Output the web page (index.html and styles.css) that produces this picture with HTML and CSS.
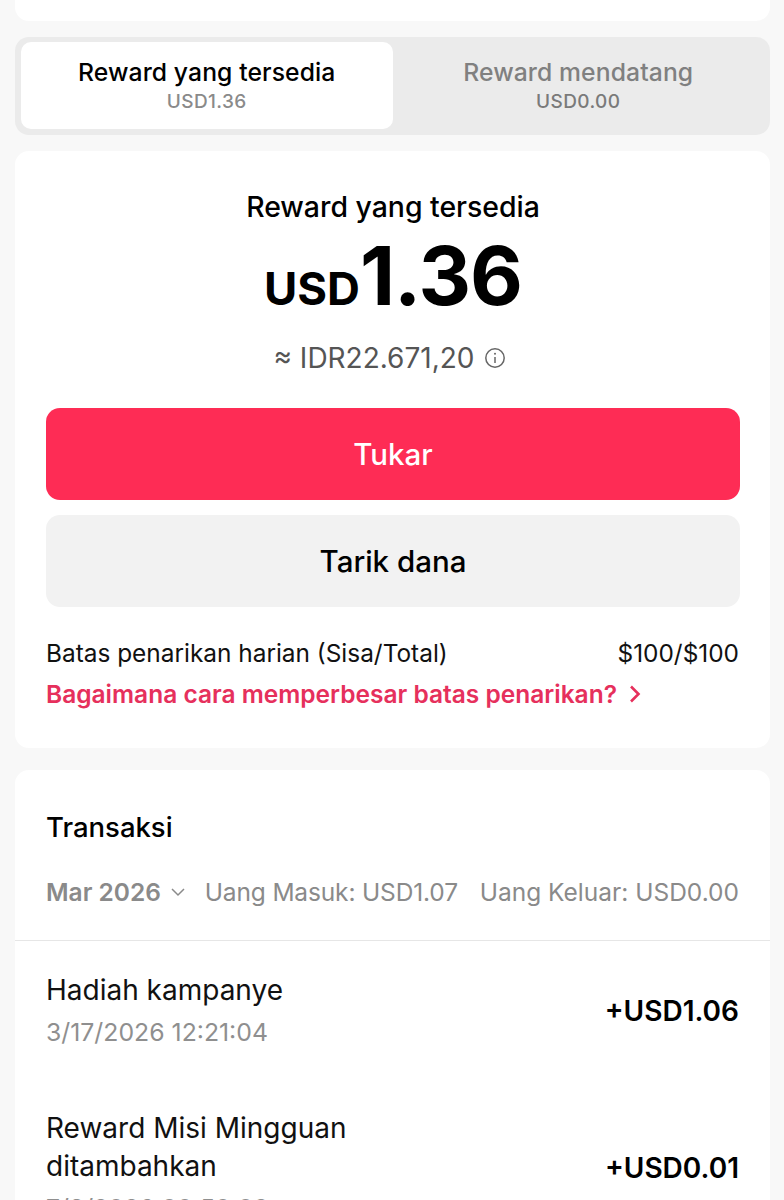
FILE: index.html
```html
<!DOCTYPE html>
<html lang="id">
<head>
  <meta charset="UTF-8">
  <meta name="viewport" content="width=device-width, initial-scale=1.0">
  <title>Reward</title>
  <link rel="stylesheet" href="styles.css">
</head>
<body>
  <div class="page">
    <div class="top-card"></div>

    <div class="tabs">
      <div class="tab active">
        <div class="tab-title">Reward yang tersedia</div>
        <div class="tab-amount">USD1.36</div>
      </div>
      <div class="tab">
        <div class="tab-title">Reward mendatang</div>
        <div class="tab-amount">USD0.00</div>
      </div>
    </div>

    <div class="card balance-card">
      <div class="balance-label">Reward yang tersedia</div>
      <div class="balance"><span class="currency">USD</span><span class="value">1.36</span></div>
      <div class="approx">
        <span>≈ IDR22.671,20</span>
        <svg class="info-icon" width="22" height="22" viewBox="0 0 22 22" fill="none" stroke="#666" stroke-width="1.5">
          <circle cx="11" cy="11" r="9.2"/>
          <path d="M11 10v6"/>
          <circle cx="11" cy="6.8" r="1" fill="#666" stroke="none"/>
        </svg>
      </div>
      <button class="btn btn-primary">Tukar</button>
      <button class="btn btn-secondary">Tarik dana</button>
      <div class="limit-row">
        <span>Batas penarikan harian (Sisa/Total)</span>
        <span>$100/$100</span>
      </div>
      <div class="limit-link">
        <span>Bagaimana cara memperbesar batas penarikan?</span>
        <svg width="12" height="18" viewBox="0 0 12 18" fill="none" stroke="#e6305c" stroke-width="2.6">
          <path d="M2 1.500 9.500 9 2 16.500"/>
        </svg>
      </div>
    </div>

    <div class="card tx-card">
      <div class="tx-title">Transaksi</div>
      <div class="tx-filter">
        <div class="month">
          <span>Mar 2026</span>
          <svg width="16" height="10" viewBox="0 0 16 10" fill="none" stroke="#8a8a8a" stroke-width="1.500">
            <path d="M2 2l6 6 6-6"/>
          </svg>
        </div>
        <span class="money-in">Uang Masuk: USD1.07</span>
        <span>Uang Keluar: USD0.00</span>
      </div>
      <div class="tx-list">
        <div class="tx-row">
          <div>
            <div class="tx-name">Hadiah kampanye</div>
            <div class="tx-date">3/17/2026 12:21:04</div>
          </div>
          <div class="tx-amount">+USD1.06</div>
        </div>
        <div class="tx-row">
          <div>
            <div class="tx-name">Reward Misi Mingguan<br>ditambahkan</div>
            <div class="tx-date">7/3/2026 00:50:02</div>
          </div>
          <div class="tx-amount">+USD0.01</div>
        </div>
      </div>
    </div>
  </div>
</body>
</html>
```

FILE: styles.css
```css
html, body {
  margin: 0;
  height: 1200px;
  overflow: hidden;
}
body {
  font-family: Inter, "Liberation Sans", sans-serif;
  background: #f8f8f8;
  color: #000;
}
.page {
  padding: 0 14px 0 15px;
  display: flex;
  flex-direction: column;
}
.top-card {
  height: 21px;
  background: #fff;
  border-radius: 0 0 14px 14px;
  margin-bottom: 16px;
}
.tabs {
  display: flex;
  height: 98px;
  box-sizing: border-box;
  padding: 5px 6px 6px;
  background: #ebebeb;
  border-radius: 14px;
  margin-bottom: 16px;
}
.tab {
  flex: 1;
  display: flex;
  flex-direction: column;
  align-items: center;
  justify-content: center;
  border-radius: 10px;
  color: #808080;
}
.tab.active {
  background: #fff;
  color: #000;
}
.tab-title {
  font-size: 24.7px;
  font-weight: 500;
  line-height: 32px;
  letter-spacing: 0.1px;
}
.tab-amount {
  font-size: 19px;
  font-weight: 500;
  line-height: 28px;
  color: #8a8a8a;
  letter-spacing: 0.4px;
}
.tab:not(.active) .tab-amount {
  color: #7a7a7a;
}
.card {
  background: #fff;
  border-radius: 14px;
}
.balance-card {
  height: 597px;
  box-sizing: border-box;
  padding: 38px 30px 0 31px;
  margin-bottom: 22px;
  display: flex;
  flex-direction: column;
}
.balance-label {
  text-align: center;
  font-size: 28.4px;
  font-weight: 500;
  line-height: 36px;
}
.balance {
  display: flex;
  justify-content: center;
  align-items: baseline;
  margin-top: 8px;
  height: 86px;
  line-height: 86px;
  font-weight: 700;
}
.currency {
  font-size: 45.5px;
}
.value {
  font-size: 81.500px;
  letter-spacing: -1px;
}
.approx {
  display: flex;
  justify-content: center;
  align-items: center;
  gap: 9px;
  margin-top: 21px;
  padding-right: 7px;
  font-size: 28px;
  line-height: 36px;
  color: #555;
}
.btn {
  display: block;
  width: 100%;
  height: 92px;
  border: 0;
  border-radius: 14px;
  font-family: inherit;
  font-size: 29.5px;
  font-weight: 500;
}
.btn-primary {
  margin-top: 32px;
  background: #fe2c55;
  color: #fff;
}
.btn-secondary {
  margin-top: 15px;
  background: #f2f2f2;
  color: #000;
}
.limit-row {
  display: flex;
  justify-content: space-between;
  margin-top: 29px;
  padding-right: 1px;
  font-size: 24.4px;
  line-height: 34px;
  color: #111;
}
.limit-link {
  display: flex;
  align-items: center;
  gap: 12px;
  margin-top: 7px;
  font-size: 24.500px;
  line-height: 34px;
  font-weight: 600;
  color: #e6305c;
}
.tx-card {
  flex: 1;
  height: 500px;
}
.tx-title {
  padding: 37px 31px 0;
  font-size: 27.5px;
  font-weight: 500;
  line-height: 40px;
}
.tx-filter {
  display: flex;
  justify-content: space-between;
  align-items: center;
  padding: 28px 31px 0;
  height: 34px;
  font-size: 24.5px;
  line-height: 34px;
  color: #8a8a8a;
}
.month {
  display: flex;
  align-items: center;
  gap: 9px;
  font-weight: 600;
}
.money-in {
  margin-right: 3px;
  letter-spacing: -0.15px;
}
.tx-list {
  margin-top: 31px;
  border-top: 1px solid #e6e6e6;
  padding: 0 31px;
}
.tx-row {
  display: flex;
  justify-content: space-between;
  align-items: center;
  padding-top: 30px;
  padding-bottom: 59px;
}
.tx-row + .tx-row {
  padding-top: 0;
}
.tx-name {
  font-size: 28px;
  line-height: 38px;
  color: #111;
}
.tx-date {
  margin-top: 5px;
  font-size: 24.8px;
  line-height: 36px;
  color: #8f8f8f;
}
.tx-amount {
  font-size: 28px;
  font-weight: 600;
}
```
